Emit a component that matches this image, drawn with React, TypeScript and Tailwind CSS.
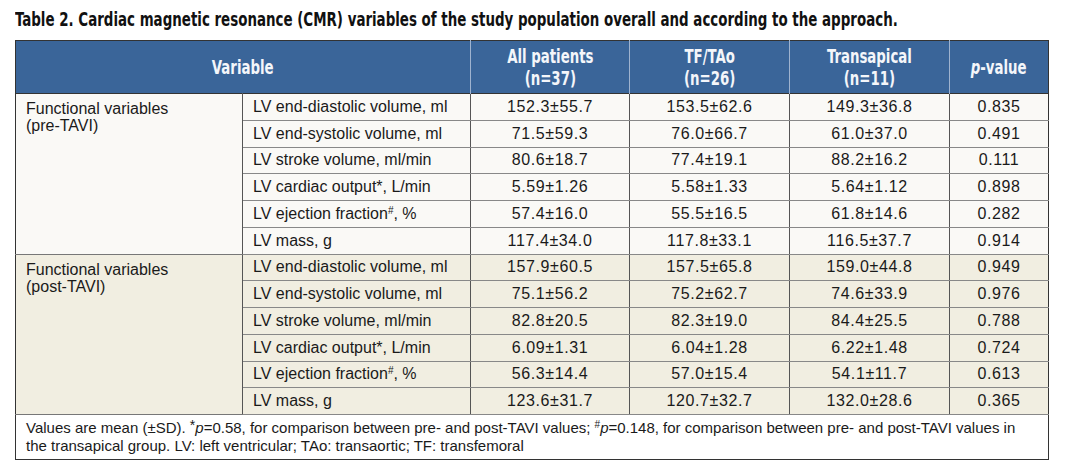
const rows = [
  ["LV end-diastolic volume, ml", "152.3±55.7", "153.5±62.6", "149.3±36.8", "0.835"],
  ["LV end-systolic volume, ml", "71.5±59.3", "76.0±66.7", "61.0±37.0", "0.491"],
  ["LV stroke volume, ml/min", "80.6±18.7", "77.4±19.1", "88.2±16.2", "0.111"],
  ["LV cardiac output*, L/min", "5.59±1.26", "5.58±1.33", "5.64±1.12", "0.898"],
  ["LV ejection fraction#, %", "57.4±16.0", "55.5±16.5", "61.8±14.6", "0.282"],
  ["LV mass, g", "117.4±34.0", "117.8±33.1", "116.5±37.7", "0.914"],
]

const postRows = [
  ["LV end-diastolic volume, ml", "157.9±60.5", "157.5±65.8", "159.0±44.8", "0.949"],
  ["LV end-systolic volume, ml", "75.1±56.2", "75.2±62.7", "74.6±33.9", "0.976"],
  ["LV stroke volume, ml/min", "82.8±20.5", "82.3±19.0", "84.4±25.5", "0.788"],
  ["LV cardiac output*, L/min", "6.09±1.31", "6.04±1.28", "6.22±1.48", "0.724"],
  ["LV ejection fraction#, %", "56.3±14.4", "57.0±15.4", "54.1±11.7", "0.613"],
  ["LV mass, g", "123.6±31.7", "120.7±32.7", "132.0±28.6", "0.365"],
]

function Label({ text }: { text: string }) {
  if (text.includes("#")) {
    const [a, b] = text.split("#")
    return (
      <>
        {a}
        <sup className="text-[10px] top-[-5px]">#</sup>
        {b}
      </>
    )
  }
  return <>{text}</>
}

function Section({ label, data, bg }: { label: string; data: string[][]; bg: string }) {
  return (
    <>
      {data.map((r, i) => (
        <tr key={i} className={`h-[26.75px] ${bg}`}>
          {i === 0 && (
            <td
              rowSpan={data.length}
              className="align-top px-[10px] pt-[6px] leading-[17px] border-r border-r-[#555] border-b border-b-[#777]"
            >
              Functional variables
              <br />
              {label}
            </td>
          )}
          <td className="px-[10px] border-b border-b-[#888] border-r border-r-[#555]">
            <Label text={r[0]} />
          </td>
          <td className="text-center tracking-[0.6px] border-b border-b-[#888] border-r border-r-[#555]">{r[1]}</td>
          <td className="text-center tracking-[0.6px] border-b border-b-[#888] border-r border-r-[#555]">{r[2]}</td>
          <td className="text-center tracking-[0.6px] border-b border-b-[#888] border-r border-r-[#555]">{r[3]}</td>
          <td className="text-center tracking-[0.6px] border-b border-b-[#888]">{r[4]}</td>
        </tr>
      ))}
    </>
  )
}

// narrow bold face: DejaVu Sans Condensed squeezed to the reference's width
function Narrow({ children }: { children: React.ReactNode }) {
  return <span className="inline-block scale-x-[0.74]">{children}</span>
}

export default function App() {
  const cond = "font-['DejaVu_Sans_Condensed','DejaVu_Sans',sans-serif] font-bold"
  return (
    <div className="bg-white w-[1067px] h-[476px] overflow-hidden pt-[7px] pl-[15px] font-['Liberation_Sans',Arial,sans-serif] text-[16px] text-[#1a1a1a]">
      <div className="h-[33px]">
        <h1
          className={`${cond} inline-block whitespace-nowrap origin-left scale-x-[0.745] text-[20px] leading-[25px] text-[#111]`}
        >
          Table 2. Cardiac magnetic resonance (CMR) variables of the study population overall and according to the approach.
        </h1>
      </div>
      <table className="border-collapse table-fixed w-[1033px] border border-[#333]">
        <colgroup>
          <col className="w-[227px]" />
          <col className="w-[228px]" />
          <col className="w-[159px]" />
          <col className="w-[160px]" />
          <col className="w-[160px]" />
          <col className="w-[99px]" />
        </colgroup>
        <thead>
          <tr className={`h-[53px] bg-[#3a6599] text-[#f4f6fa] ${cond} text-[20px] leading-[22px] border-b border-b-[#333]`}>
            <th colSpan={2} className="border-r border-r-[#9fb3cf] font-bold">
              <Narrow>Variable</Narrow>
            </th>
            <th className="border-r border-r-[#9fb3cf] font-bold">
              <Narrow>
                All patients
                <br />
                (n=37)
              </Narrow>
            </th>
            <th className="border-r border-r-[#9fb3cf] font-bold">
              <Narrow>
                TF/TAo
                <br />
                (n=26)
              </Narrow>
            </th>
            <th className="border-r border-r-[#9fb3cf] font-bold">
              <Narrow>
                Transapical
                <br />
                (n=11)
              </Narrow>
            </th>
            <th className="font-bold">
              <Narrow>
                <i>p</i>-value
              </Narrow>
            </th>
          </tr>
        </thead>
        <tbody>
          <Section label="(pre-TAVI)" data={rows} bg="bg-[#faf9f6]" />
          <Section label="(post-TAVI)" data={postRows} bg="bg-[#f1eee1]" />
          <tr className="h-[45px] bg-white">
            <td colSpan={6} className="px-[10px] text-[15px] leading-[18px] align-middle">
              Values are mean (±SD). <sup className="text-[14px] top-[-3px]">*</sup>
              <i>p</i>=0.58, for comparison between pre- and post-TAVI values;{" "}
              <sup className="text-[10px] top-[-5px]">#</sup>
              <i>p</i>=0.148, for comparison between pre- and post-TAVI values in
              <br />
              the transapical group. LV: left ventricular; TAo: transaortic; TF: transfemoral
            </td>
          </tr>
        </tbody>
      </table>
    </div>
  )
}
